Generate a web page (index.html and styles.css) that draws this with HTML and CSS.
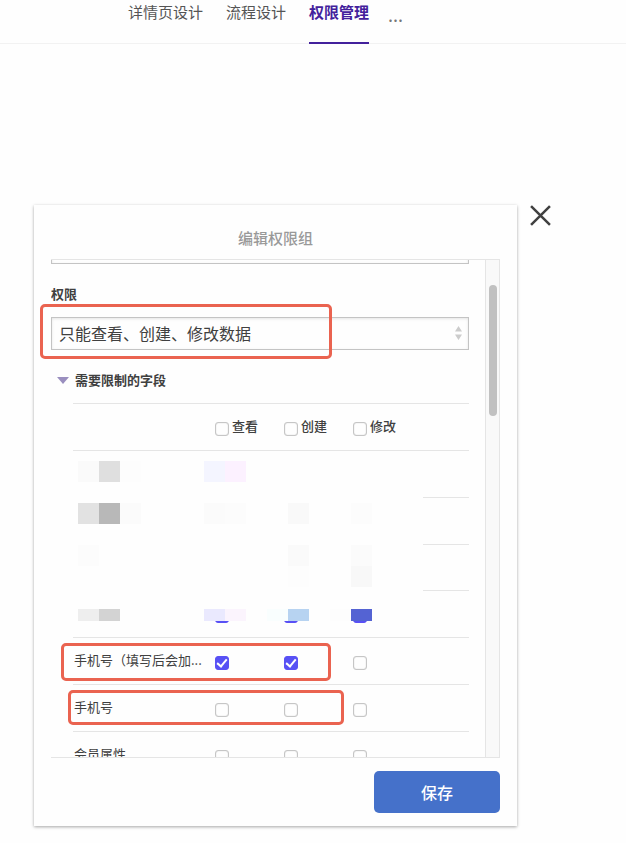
FILE: index.html
```html
<!DOCTYPE html>
<html lang="zh-CN">
<head>
<meta charset="utf-8">
<meta name="viewport" content="width=device-width, initial-scale=1">
<title>权限管理</title>
<link rel="stylesheet" href="styles.css">
</head>
<body>
<nav class="tabs">
  <a class="tab" href="#detail">详情页设计</a>
  <a class="tab" href="#flow">流程设计</a>
  <a class="tab active" href="#permission" aria-current="page">权限管理</a>
  <button class="tab-more" type="button" aria-label="更多">...</button>
</nav>
<main class="stage">
  <section class="dialog" role="dialog" aria-labelledby="dialog-title">
    <h1 class="dialog-title" id="dialog-title">编辑权限组</h1>
    <div class="viewport">
      <div class="content">
        <input class="field group-name" type="text" aria-label="名称">
        <label class="field-label" for="permission">权限</label>
        <div class="select-wrap">
          <select class="field" id="permission">
            <option>只能查看、创建、修改数据</option>
          </select>
          <svg class="arrows" viewBox="0 0 7 14" aria-hidden="true"><path d="M3.5 0L7 5.5H0zM0 8.5h7L3.5 14z"/></svg>
        </div>
        <button class="toggle" type="button" aria-expanded="true"><span class="triangle"></span>需要限制的字段</button>
        <div class="table-wrap">
          <table class="fields">
            <colgroup><col class="name-col"><col class="check-col"><col class="check-col"><col></colgroup>
            <thead>
              <tr>
                <td></td>
                <th><label class="check"><input type="checkbox">查看</label></th>
                <th><label class="check"><input type="checkbox">创建</label></th>
                <th><label class="check"><input type="checkbox">修改</label></th>
              </tr>
            </thead>
            <tbody>
              <tr><td colspan="4"></td></tr>
              <tr><td colspan="4"></td></tr>
              <tr class="compact"><td colspan="4"></td></tr>
              <tr>
                <td></td>
                <td><label class="check"><input type="checkbox" aria-label="查看" checked></label></td>
                <td><label class="check"><input type="checkbox" aria-label="创建" checked></label></td>
                <td><label class="check"><input type="checkbox" aria-label="修改" checked></label></td>
              </tr>
              <tr>
                <td class="name">手机号（填写后会加...</td>
                <td><label class="check"><input type="checkbox" aria-label="查看" checked></label></td>
                <td><label class="check"><input type="checkbox" aria-label="创建" checked></label></td>
                <td><label class="check"><input type="checkbox" aria-label="修改"></label></td>
              </tr>
              <tr>
                <td class="name">手机号</td>
                <td><label class="check"><input type="checkbox" aria-label="查看"></label></td>
                <td><label class="check"><input type="checkbox" aria-label="创建"></label></td>
                <td><label class="check"><input type="checkbox" aria-label="修改"></label></td>
              </tr>
              <tr>
                <td class="name">会员属性</td>
                <td><label class="check"><input type="checkbox" aria-label="查看"></label></td>
                <td><label class="check"><input type="checkbox" aria-label="创建"></label></td>
                <td><label class="check"><input type="checkbox" aria-label="修改"></label></td>
              </tr>
            </tbody>
          </table>
          <svg class="mosaic" viewBox="0 0 350 166" shape-rendering="crispEdges" aria-hidden="true">
            <rect width="350" height="166" fill="#fefefe"/>
            <rect x="5" y="6" width="21" height="21" fill="#fafafa"/>
            <rect x="26" y="6" width="21" height="21" fill="#dfdfdf"/>
            <rect x="47" y="6" width="21" height="21" fill="#fdfdfd"/>
            <rect x="131" y="6" width="21" height="21" fill="#f4f5ff"/>
            <rect x="152" y="6" width="21" height="21" fill="#fcf1ff"/>
            <rect x="5" y="48" width="21" height="21" fill="#e2e2e2"/>
            <rect x="26" y="48" width="21" height="21" fill="#b8b8b8"/>
            <rect x="47" y="48" width="21" height="21" fill="#fbfbfb"/>
            <rect x="131" y="48" width="21" height="21" fill="#fbfbfb"/>
            <rect x="152" y="48" width="21" height="21" fill="#fcfcfc"/>
            <rect x="215" y="48" width="21" height="21" fill="#f9f9f9"/>
            <rect x="278" y="48" width="21" height="21" fill="#fcfcfc"/>
            <rect x="5" y="90" width="21" height="21" fill="#fcfcfc"/>
            <rect x="215" y="90" width="21" height="21" fill="#fafafa"/>
            <rect x="278" y="90" width="21" height="21" fill="#fbfbfb"/>
            <rect x="215" y="111" width="21" height="21" fill="#fdfdfd"/>
            <rect x="278" y="111" width="21" height="21" fill="#f8f8f8"/>
            <rect x="5" y="154" width="21" height="12" fill="#eeeeee"/>
            <rect x="26" y="154" width="21" height="12" fill="#d3d3d3"/>
            <rect x="131" y="154" width="21" height="12" fill="#eae9fe"/>
            <rect x="152" y="154" width="21" height="12" fill="#fbf4fd"/>
            <rect x="194" y="154" width="21" height="12" fill="#f9fefe"/>
            <rect x="215" y="154" width="21" height="12" fill="#b7d3f1"/>
            <rect x="257" y="154" width="21" height="12" fill="#fdfdfd"/>
            <rect x="278" y="154" width="21" height="12" fill="#5463d3"/>
          </svg>
        </div>
      </div>
      <div class="scrollbar"><div class="thumb"></div></div>
    </div>
    <button class="save" type="button">保存</button>
    <span class="mark mark-permission"></span>
    <span class="mark mark-row-long"></span>
    <span class="mark mark-row-phone"></span>
  </section>
  <button class="close" type="button" aria-label="关闭">
    <svg viewBox="0 0 20 20" aria-hidden="true"><path d="M1 1l18 18M19 1L1 19"/></svg>
  </button>
</main>
</body>
</html>
```
FILE: styles.css
```css
* {
  box-sizing: border-box;
}

body {
  margin: 0;
  background: #fefefe;
  color: #404040;
  font-family: "Noto Sans CJK SC", sans-serif;
  font-size: 13px;
  line-height: 20px;
}

button,
input,
select {
  margin: 0;
  padding: 0;
  border: 0;
  background: none;
  color: inherit;
  font: inherit;
}

.tabs {
  display: flex;
  gap: 23px;
  height: 44px;
  padding-left: 128px;
  border-bottom: 1px solid #f2f2f2;
}

.tab {
  height: 44px;
  padding-top: 2px;
  color: #555;
  font-size: 15px;
  line-height: 20px;
  text-decoration: none;
}

.tab.active {
  border-bottom: 2px solid #43219c;
  color: #43219c;
  font-weight: 700;
}

.tab-more {
  align-self: flex-start;
  margin-left: -4px;
  padding-top: 4px;
  color: #777;
  font-size: 18px;
  line-height: 20px;
}

.stage {
  display: grid;
  grid-template-columns: 1fr 96px;
  gap: 13px;
  align-items: start;
  padding: 161px 0 16px 34px;
}

.dialog {
  position: relative;
  display: flex;
  flex-direction: column;
  padding: 23px 17px 13px;
  background: #fefefe;
  box-shadow: 0 1px 3px rgba(0, 0, 0, 0.35);
}

.dialog-title {
  margin: 0 0 11px;
  color: #999;
  font-size: 15px;
  font-weight: 500;
  line-height: 20px;
  text-align: center;
}

.viewport {
  display: flex;
  height: 499px;
  overflow: hidden;
  border-top: 1px solid #e5e5e5;
  border-bottom: 1px solid #e5e5e5;
}

.content {
  flex: 1;
  margin-right: 16px;
}

.field {
  display: block;
  width: 100%;
  height: 33px;
  padding: 0 7px 2px;
  border: 1px solid #c4c4c4;
  border-radius: 0;
  background: #fefefe;
  box-shadow: inset 0 1px 3px rgba(0, 0, 0, 0.1);
  font-size: 16px;
  appearance: none;
}

.group-name {
  margin-top: -29px;
}

.field-label {
  display: block;
  margin: 20px 0 13px;
  font-weight: 700;
}

.select-wrap {
  position: relative;
}

.arrows {
  position: absolute;
  top: 9px;
  right: 7px;
  width: 7px;
  height: 14px;
  fill: #ccc;
  pointer-events: none;
}

.toggle {
  display: flex;
  gap: 6px;
  margin: 20px 0 13px;
  padding-left: 6px;
  font-weight: 700;
}

.triangle {
  margin-top: 7px;
  border-top: 7px solid #9a8fbf;
  border-right: 6px solid transparent;
  border-left: 6px solid transparent;
}

.table-wrap {
  position: relative;
  margin-left: 22px;
}

.fields {
  width: 100%;
  border-spacing: 0;
  table-layout: fixed;
}

.name-col {
  width: 142px;
}

.check-col {
  width: 69px;
}

.fields th,
.fields td {
  height: 47px;
  padding: 0 0 2px;
  border-top: 1px solid #e5e5e5;
  font-weight: 400;
  text-align: left;
  vertical-align: middle;
  white-space: nowrap;
}

.fields .compact td {
  height: 46px;
}

.fields .name {
  padding-left: 1px;
}

.fields th {
  font-weight: 500;
}

.check {
  display: flex;
  gap: 3px;
  align-items: center;
}

.check input {
  display: grid;
  place-items: center;
  width: 14px;
  height: 14px;
  margin: 5px 0 0;
  border: 1px solid #c6c6c6;
  border-radius: 3px;
  background: #fefefe;
  box-shadow: inset 0 0 1px #aaa;
  appearance: none;
}

.check input:checked {
  border-color: #5a50f5;
  background: #5751f4;
  box-shadow: none;
}

.check input:checked::after {
  width: 4px;
  height: 8px;
  margin-bottom: 2px;
  border: solid #fff;
  border-width: 0 2px 2px 0;
  content: "";
  transform: rotate(40deg);
}

.mosaic {
  position: absolute;
  top: 52px;
  left: 0;
  width: 350px;
  height: 166px;
}

.scrollbar {
  width: 15px;
  padding: 25px 3px 0;
  border: solid #e5e5e5;
  border-width: 0 1px;
  background: #f9f9f9;
}

.thumb {
  width: 8px;
  height: 131px;
  border-radius: 4px;
  background: #c1c1c1;
}

.save {
  align-self: flex-end;
  width: 126px;
  height: 42px;
  margin-top: 13px;
  border-radius: 5px;
  background: #4571ca;
  color: #fff;
  font-size: 16px;
  font-weight: 500;
}

.close {
  justify-self: start;
  width: 21px;
  height: 21px;
}

.close svg {
  display: block;
  width: 21px;
  height: 21px;
  fill: none;
  stroke: #404040;
  stroke-width: 2.4;
}

.mark {
  position: absolute;
  border: 3px solid #ea6350;
  border-radius: 5px;
  pointer-events: none;
}

.mark-permission {
  top: 99px;
  left: 6px;
  width: 292px;
  height: 55px;
}

.mark-row-long {
  top: 438px;
  left: 27px;
  width: 270px;
  height: 38px;
}

.mark-row-phone {
  top: 485px;
  left: 34px;
  width: 276px;
  height: 35px;
}
```
